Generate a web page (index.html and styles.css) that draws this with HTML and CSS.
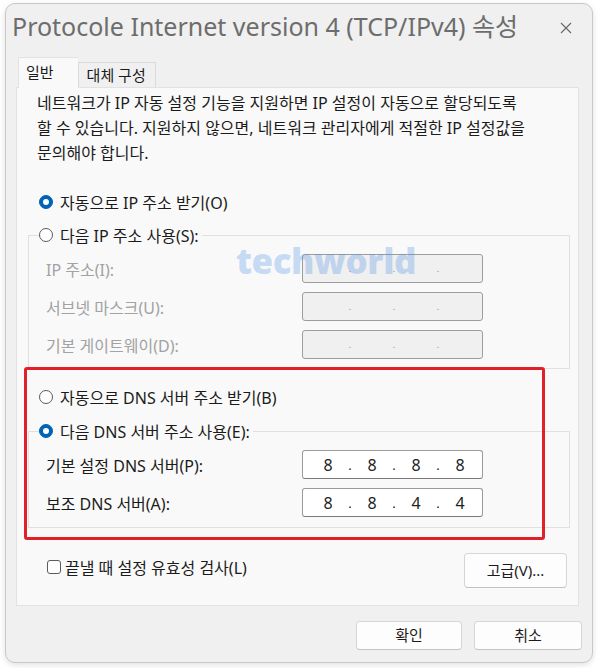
FILE: index.html
```html
<!DOCTYPE html>
<html lang="ko">
<head>
    <meta charset="UTF-8">
    <meta name="viewport" content="width=device-width, initial-scale=1.0">
    <title>Protocole Internet version 4 (TCP/IPv4) 속성</title>
    <link rel="stylesheet" href="styles.css">
</head>
<body>
    <div class="window">
        <div class="titlebar">
            <span class="title">Protocole Internet version 4 (TCP/IPv4) 속성</span>
            <svg class="close" width="12" height="12" viewBox="0 0 12 12">
                <path d="M1 1 L11 11 M11 1 L1 11" stroke="#666" stroke-width="1.1" fill="none"/>
            </svg>
        </div>
        <div class="tabs">
            <div class="tab active">일반</div>
            <div class="tab">대체 구성</div>
        </div>
        <div class="panel">
            <p class="intro">네트워크가 IP 자동 설정 기능을 지원하면 IP 설정이 자동으로 할당되도록<br>할 수 있습니다. 지원하지 않으면, 네트워크 관리자에게 적절한 IP 설정값을<br>문의해야 합니다.</p>

            <div class="radio-row first"><span class="radio checked"></span>자동으로 IP 주소 받기(O)</div>
            <fieldset class="group">
                <legend class="radio-row"><span class="radio"></span>다음 IP 주소 사용(S):</legend>
                <div class="field disabled first">
                    <span class="field-label">IP 주소(I):</span>
                    <div class="ip"><span class="seg"></span><span class="dot">.</span><span class="seg"></span><span class="dot">.</span><span class="seg"></span><span class="dot">.</span><span class="seg"></span></div>
                </div>
                <div class="field disabled">
                    <span class="field-label">서브넷 마스크(U):</span>
                    <div class="ip"><span class="seg"></span><span class="dot">.</span><span class="seg"></span><span class="dot">.</span><span class="seg"></span><span class="dot">.</span><span class="seg"></span></div>
                </div>
                <div class="field disabled">
                    <span class="field-label">기본 게이트웨이(D):</span>
                    <div class="ip"><span class="seg"></span><span class="dot">.</span><span class="seg"></span><span class="dot">.</span><span class="seg"></span><span class="dot">.</span><span class="seg"></span></div>
                </div>
            </fieldset>

            <div class="radio-row dns-first"><span class="radio"></span>자동으로 DNS 서버 주소 받기(B)</div>
            <fieldset class="group dns-group">
                <legend class="radio-row"><span class="radio checked"></span>다음 DNS 서버 주소 사용(E):</legend>
                <div class="field first">
                    <span class="field-label">기본 설정 DNS 서버(P):</span>
                    <div class="ip"><span class="seg">8</span><span class="dot">.</span><span class="seg">8</span><span class="dot">.</span><span class="seg">8</span><span class="dot">.</span><span class="seg">8</span></div>
                </div>
                <div class="field">
                    <span class="field-label">보조 DNS 서버(A):</span>
                    <div class="ip"><span class="seg">8</span><span class="dot">.</span><span class="seg">8</span><span class="dot">.</span><span class="seg">4</span><span class="dot">.</span><span class="seg">4</span></div>
                </div>
            </fieldset>

            <div class="bottom-row">
                <div class="check-row"><span class="checkbox"></span>끝낼 때 설정 유효성 검사(L)</div>
                <div class="button advanced">고급(V)...</div>
            </div>

            <!-- overlays from the screenshot -->
            <div class="watermark">techworld</div>
            <div class="highlight"></div>
        </div>
        <div class="actions">
            <div class="button ok">확인</div>
            <div class="button cancel">취소</div>
        </div>
    </div>
</body>
</html>
```

FILE: styles.css
```css
* {
    box-sizing: border-box;
}
body {
    margin: 0;
    width: 600px;
    height: 668px;
    background-color: #fff;
    font-family: "Noto Sans", "Noto Sans CJK KR", sans-serif;
    font-size: 16px;
    color: #1b1b1b;
    overflow: hidden;
}
.window {
    width: 588px;
    height: 660px;
    margin: 3px 0 0 5px;
    background-color: #f0f0f0;
    border: 1px solid #c8c8c8;
    border-radius: 10px;
    box-shadow: 0 2px 6px rgba(0, 0, 0, 0.12);
}
.titlebar {
    height: 53px;
    display: flex;
    justify-content: space-between;
    align-items: flex-start;
    padding: 7px 20px 0 6px;
}
.title {
    font-size: 25px;
    line-height: 30px;
    color: #6d6d6d;
    white-space: nowrap;
}
.close {
    margin-top: 11px;
}
.tabs {
    display: flex;
    align-items: flex-end;
    height: 30px;
    padding-left: 12px;
}
.tab {
    height: 25px;
    line-height: 24px;
    padding: 0 9px 0 8px;
    font-size: 15px;
    background-color: #f0f0f0;
    border: 1px solid #dadada;
    border-bottom: none;
}
.tab.active {
    height: 31px;
    margin-bottom: -1px;
    line-height: 28px;
    padding: 0 24px 0 7px;
    background-color: #f9f9f9;
    border-color: #e2e2e2;
    border-right: none;
    position: relative;
    z-index: 1;
}
.panel {
    position: relative;
    width: 563px;
    height: 519px;
    margin-left: 10px;
    background-color: #f9f9f9;
    border: 1px solid #e2e2e2;
}
.intro {
    margin: 3px 0 0 20px;
    line-height: 25px;
    white-space: nowrap;
}
.radio-row {
    display: flex;
    align-items: center;
    height: 26px;
    white-space: nowrap;
}
.radio-row.first {
    margin: 23px 0 0 22px;
}
.radio-row.dns-first {
    margin: 15px 0 0 22px;
}
.radio {
    width: 14px;
    height: 14px;
    margin-right: 7px;
    border: 1px solid #5a5a5a;
    border-radius: 50%;
    background-color: #fff;
    position: relative;
}
.radio.checked {
    background-color: #0063b8;
    border-color: #0063b8;
}
.radio.checked::after {
    content: "";
    position: absolute;
    left: 3px;
    top: 3px;
    width: 6px;
    height: 6px;
    border-radius: 50%;
    background-color: #fff;
}
.group {
    margin: 7px 8px 0 11px;
    padding: 0 10px 9px 10px;
    border: 1px solid #e0e0e0;
    min-width: 0;
}
.group legend {
    padding: 0 3px 0 0;
}
.dns-group {
    margin-top: 8px;
    padding-bottom: 10px;
}
.field {
    display: flex;
    align-items: center;
    margin-top: 9px;
    padding-left: 7px;
}
.field.first {
    margin-top: 6px;
}
.dns-group .field {
    margin-top: 9px;
}
.dns-group .field.first {
    margin-top: 6px;
}
.field-label {
    width: 256px;
    white-space: nowrap;
}
.ip {
    display: flex;
    width: 181px;
    height: 29px;
    padding-left: 5px;
    align-items: center;
    background-color: #fff;
    border: 1px solid #9a9a9a;
    border-bottom-color: #7a7a7a;
    border-radius: 3px;
    color: #222;
}
.seg {
    width: 40px;
    text-align: center;
}
.dot {
    width: 4px;
    text-align: center;
    font-size: 13px;
}
.field.disabled .field-label {
    color: #a2a2a2;
}
.field.disabled .ip {
    background-color: #f0f0f0;
    border-color: #9d9d9d;
    color: #8a8a8a;
}
.field.disabled .dot {
    font-size: 9px;
}
.bottom-row {
    display: flex;
    justify-content: space-between;
    align-items: flex-start;
    margin: 25px 11px 0 30px;
}
.check-row {
    display: flex;
    align-items: center;
    height: 26px;
    margin-top: 1px;
    white-space: nowrap;
}
.checkbox {
    width: 14px;
    height: 14px;
    margin-right: 4px;
    border: 1px solid #5a5a5a;
    border-radius: 3px;
    background-color: #fff;
}
.button {
    height: 29px;
    line-height: 27px;
    text-align: center;
    background-color: #fdfdfd;
    border: 1px solid #d6d6d6;
    border-bottom-color: #c2c2c2;
    border-radius: 4px;
    font-size: 15px;
}
.advanced {
    width: 103px;
    height: 35px;
    line-height: 33px;
}
.actions {
    display: flex;
    justify-content: flex-end;
    gap: 12px;
    padding: 15px 10px 0 0;
}
.ok {
    width: 106px;
}
.cancel {
    width: 108px;
}
.watermark {
    position: absolute;
    left: 219px;
    top: 149px;
    font-family: "Open Sans", sans-serif;
    font-weight: 800;
    font-size: 35px;
    letter-spacing: -0.5px;
    color: rgba(70, 140, 230, 0.28);
    pointer-events: none;
}
.highlight {
    position: absolute;
    left: 7px;
    top: 279px;
    width: 521px;
    height: 173px;
    border: 3px solid #e1202b;
    border-radius: 3px;
}
```
